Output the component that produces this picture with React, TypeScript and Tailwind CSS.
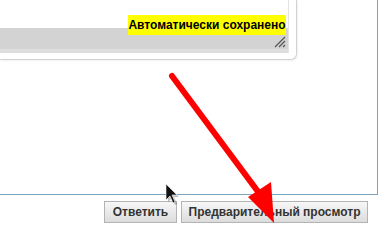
import React from 'react';

const font = { fontFamily: '"Liberation Sans", Arial, sans-serif' };

const Overlay: React.FC = () => (
  <svg className="absolute inset-0 pointer-events-none" width={392} height={244} viewBox="0 0 392 244">
    {/* red arrow */}
    <line x1={172} y1={76} x2={259} y2={193} stroke="#ff0000" strokeWidth={6} strokeLinecap="round" />
    <polygon points="248,197 271,182 274,223" fill="#ff0000" />
    {/* mouse cursor */}
    <g transform="translate(166,184)">
      <path d="M2 2 L2 18 L6 14 L9 21 L11 20 L8 13 L13 13 Z" fill="#000" opacity={0.25} />
      <path d="M0 0 L0 16 L4 12 L7 19 L9 18 L6 11 L11 11 Z" fill="#111" stroke="#fff" strokeWidth={0.6} />
    </g>
  </svg>
);

const App: React.FC = () => {
  return (
    <div className="relative w-[392px] h-[244px] overflow-hidden bg-white" style={font}>
      {/* reply box */}
      <div className="w-[378px] h-[195px] border-r border-b border-[#7ba3c0]">
        {/* editor panel */}
        <div className="w-[297px] h-[60px] pr-[7px] pb-[6px] border-r border-b border-[#d2d2d2] rounded-br-[6px] shadow-[1px_1px_2px_rgba(0,0,0,0.06)]">
          <div className="relative w-[289px] h-[53px] flex flex-col border-r border-[#e4e4e4]">
            <div className="h-[28px] bg-white" />
            <div className="flex-1 bg-[#d3d3d3] border-b-[4px] border-[#dedede] relative">
              {/* resize grip */}
              <svg className="absolute right-[2px] bottom-[1px]" width={12} height={12} viewBox="0 0 12 12">
                <line x1={1} y1={11} x2={11} y2={1} stroke="#555" strokeWidth={1.2} />
                <line x1={5} y1={11} x2={11} y2={5} stroke="#555" strokeWidth={1.2} />
                <line x1={9} y1={11} x2={11} y2={9} stroke="#555" strokeWidth={1.2} />
              </svg>
            </div>
            {/* autosave badge */}
            <div className="absolute left-[128px] top-[15px] w-[158px] h-[20px] bg-[#ffff00] flex items-center justify-center text-[12px] font-bold text-black leading-none">
              Автоматически сохранено
            </div>
          </div>
        </div>
      </div>

      {/* buttons */}
      <div className="flex justify-end gap-[4px] pr-[24px] mt-[6px]">
        <button className="w-[73px] h-[22px] border border-[#b3b3b3] bg-gradient-to-b from-[#f7f7f7] to-[#dcdcdc] text-[12px] font-bold text-[#333] leading-none">
          Ответить
        </button>
        <button className="w-[187px] h-[22px] border border-[#b3b3b3] bg-gradient-to-b from-[#f7f7f7] to-[#dcdcdc] text-[12px] font-bold text-[#333] leading-none">
          Предварительный просмотр
        </button>
      </div>

      <Overlay />
    </div>
  );
};

export default App;
